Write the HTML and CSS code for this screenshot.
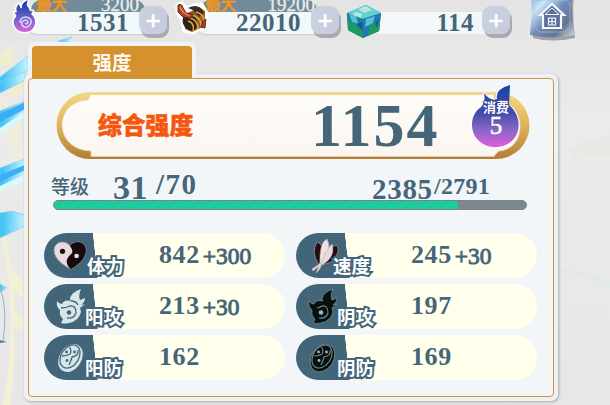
FILE: index.html
```html
<!DOCTYPE html>
<html lang="zh-CN">
<head>
    <meta charset="UTF-8">
    <meta name="viewport" content="width=device-width, initial-scale=1.0">
    <title>强度</title>
    <link rel="stylesheet" href="styles.css">
</head>
<body>

    <!-- Background scenery -->
    <svg class="scenery" width="610" height="405" viewBox="0 0 610 405">
        <defs>
            <linearGradient id="ray" x1="0" y1="0" x2="1" y2="0">
                <stop offset="0" stop-color="#35bdf5"/>
                <stop offset="1" stop-color="#c5f5ff"/>
            </linearGradient>
        </defs>
        <path d="M0 55 14 43 13 66 0 65zM8 88 28 74V89L10 100z" fill="#f0edcf"/>
        <path d="M0 98 8 108M0 106 5 113M5 134 20 125M7 140 22 132M9 146 23 139M10 152 24 145M12 158 25 151" stroke="#f3efd0" stroke-width="3"/>
        <path d="M0 234Q20 310 3 405H10Q18 350 12 326L25 333V320L14 310V291L25 300V283L12 270Q8 240 0 225z" fill="#f3f0d5"/>
        <g fill="url(#ray)" stroke="#86cfe8" stroke-width=".7">
            <path d="M0 77 28 56V70L0 89z"/>
            <path d="M58 41 72 37 66 43z"/>
            <path d="M0 82 25 72V80L0 93z"/>
            <path d="M0 111 25 101V118L0 132z"/>
            <path d="M0 168 25 159V180L0 190z"/>
            <path d="M0 213 12 211 25 215V226L0 238z"/>
            <path d="M0 284 7 288 0 292z"/>
        </g>
        <path d="M0 114 25 102V109L0 122zM0 175 25 165V170L0 182z" fill="#3caef4"/>
        <path d="M0 128 25 111V118L0 134zM0 186 25 174V181L0 191z" fill="#dcf8fe"/>
        <path d="M0 287Q8 310 3 341" fill="none" stroke="#8fb5b8"/>
        <path d="M0 340 7 342 0 343z" fill="#4f8794"/>
        <path d="M561 268Q585 272 610 283V287Q585 276 561 271z" fill="#e0eae5"/>
        <path d="M568 150Q590 138 610 135V156Q590 152 574 161z" fill="#e8e8e5"/>
    </svg>

    <div class="top-bar">
        <div class="resource soul">
            <svg class="resource-icon" width="26" height="36" viewBox="0 0 26 36">
                <defs>
                    <linearGradient id="flame" x1="0" y1="0" x2="0" y2="1">
                        <stop offset=".1" stop-color="#1740a8"/>
                        <stop offset=".55" stop-color="#6a62c4"/>
                        <stop offset="1" stop-color="#d764dc"/>
                    </linearGradient>
                </defs>
                <path d="M16 0Q9 3 10 8 8 9 7 4 3 8 5 12L2 13Q5 14 4 17C1 19 2 24 2 24 3 29 7 32 13 32S23 28 23 22Q23 17 19 14L21 11Q17 12 17 8 13 5 16 0z" fill="url(#flame)" stroke="#fff" stroke-width="3" stroke-linejoin="round" paint-order="stroke"/>
                <path d="M8 23Q8 17 14 17 20 18 19 23 17 28 12 27 8 24 11 21 15 19 16 22 15 25 13 23" fill="none" stroke="#d4ccf4" stroke-width="1.7"/>
            </svg>
            <div class="meter">
                <div class="limit"><span class="limit-label">最大</span><span>3200</span></div>
                <div class="amount">1531</div>
            </div>
            <button class="plus">+</button>
        </div>

        <div class="resource drum">
            <svg class="resource-icon" width="34" height="36" viewBox="0 0 34 36">
                <path d="M2 5 7 3 11 8 19 5 27 4 32 13 30 28 25 29 18 33 9 31 7 20 2 13z" fill="#fff" stroke="#fff" stroke-width="3" stroke-linejoin="round"/>
                <path d="M9 15 24 7 30 11 30 26 17 32 10 29z" fill="#986021"/>
                <ellipse cx="15" cy="22" rx="7" ry="9" fill="#2f211b" transform="rotate(-25 15 22)"/>
                <path d="M13 8Q24 2 29 13L24 17 18 10z" fill="#3d2a20"/>
                <path d="M15 15Q26 16 26 26M21 12Q29 14 29 21M13 21Q20 23 18 31M15 18Q23 20 23 29" fill="none" stroke="#e1a63f" stroke-width="1.5"/>
                <path d="M3 5Q7 3 8 8L11 13 18 14 16 18 8 17 3 12zM28 21 31 19 30 28 26 27z" fill="#b34328" stroke="#69271b"/>
                <path d="M5 7 8 12 14 16" fill="none" stroke="#e78159" stroke-width="1.5"/>
            </svg>
            <div class="meter">
                <div class="limit"><span class="limit-label">最大</span><span>19200</span></div>
                <div class="amount">22010</div>
            </div>
            <button class="plus">+</button>
        </div>

        <div class="resource cube">
            <svg class="resource-icon" width="36" height="35" viewBox="0 0 36 35">
                <path d="M1 9 20 1 35 9 33 27 17 34 2 26z" fill="#1686a3"/>
                <path d="M1 9 20 1 35 9 17 15z" fill="#67d0d2"/>
                <path d="M17 15 35 9 33 27 17 34z" fill="#2378ad"/>
                <path d="M1 9 17 15 17 34 2 26z" fill="#168591"/>
                <path d="M2 17 9 20 17 28V34L2 26zM24 20 34 17 33 27 22 31z" fill="#1b9b62"/>
                <path d="M3 10 10 12 12 20 6 18zM20 15 29 12 27 19 19 23z" fill="#58bfd6"/>
                <path d="M12 5 20 2 26 6 18 9zM9 8 16 10 15 14 7 11z" fill="#b3e9df"/>
                <path d="M10 20 17 18 16 26zM29 20 33 14 31 24z" fill="#1958a1"/>
            </svg>
            <div class="meter">
                <div class="amount">114</div>
            </div>
            <button class="plus">+</button>
        </div>

        <svg class="home" width="48" height="44" viewBox="0 0 48 44">
            <defs>
                <linearGradient id="glass" x1="0" y1="0" x2="1" y2="1">
                    <stop offset="0" stop-color="#7fa6d9"/>
                    <stop offset=".25" stop-color="#c9e8fa"/>
                    <stop offset=".5" stop-color="#728bb9"/>
                    <stop offset=".75" stop-color="#66758f"/>
                    <stop offset="1" stop-color="#d9dfe4"/>
                </linearGradient>
            </defs>
            <path d="M5-4Q24 0 46-4 44 16 47 38 24 43 5 38 6 18 5-4z" fill="#a2a3a6"/>
            <path d="M3-6Q24-2 44-6 43 14 46 35 24 40 2 35 4 16 3-6z" fill="url(#glass)"/>
            <path d="M6 3V27L11 32H37L42 27V3L38 0H10z" fill="none" stroke="#a9bad8" stroke-opacity=".7"/>
            <path d="M12 15 24 4 36 15H33V28H15V15z" fill="#5c719a" stroke="#f5f8fc" stroke-width="2.200"/>
            <path d="M17 14.500 24 8 31 14.500z" fill="#5c719a" stroke="#f5f8fc"/>
            <path d="M20.500 18h7v7h-7zM24 18v7M20.500 21.500h7" fill="#5c719a" stroke="#f5f8fc" stroke-width="1.200"/>
        </svg>
    </div>

    <div class="window">
        <div class="tab">强度</div>
        <div class="panel">
            <div class="panel-inner">

                <div class="banner">
                    <svg class="banner-frame" width="474" height="68" viewBox="0 0 474 68">
                        <defs>
                            <linearGradient id="gold" x1="0" y1="0" x2="0" y2="1">
                                <stop offset="0" stop-color="#f3d984"/>
                                <stop offset=".5" stop-color="#dfb35a"/>
                                <stop offset="1" stop-color="#b27e35"/>
                            </linearGradient>
                            <linearGradient id="cream" x1="0" y1="0" x2="0" y2="1">
                                <stop offset="0" stop-color="#fffdf9"/>
                                <stop offset="1" stop-color="#faf5ef"/>
                            </linearGradient>
                        </defs>
                        <rect x=".5" y="0" width="473" height="67" rx="33.5" fill="url(#gold)"/>
                        <path d="M35 2.500H438V8C472 10 472 57 443 59Q440 61 438 64.500H35V59C-3 58-3 10 31 8Q34 7 33 4z" fill="url(#cream)" stroke="#f1c5a0" stroke-width=".8"/>
                    </svg>
                    <span class="banner-label">综合强度</span>
                    <span class="banner-value">1154</span>
                    <div class="cost">
                        <svg class="cost-flame" width="50" height="65" viewBox="0 0 50 65">
                            <defs>
                                <linearGradient id="orb" x1="0" y1="0" x2="0" y2="1">
                                    <stop offset="0" stop-color="#1745ad"/>
                                    <stop offset=".45" stop-color="#464ba8"/>
                                    <stop offset=".72" stop-color="#8668c8"/>
                                    <stop offset="1" stop-color="#df5dda"/>
                                </linearGradient>
                            </defs>
                            <path d="M39 0Q24 4 26 14 20 17 13 8 15 17 10 22C-2 30-1 48 7 55 17 65 33 64 42 55 51 45 49 29 38 20 37 12 39 0z" fill="url(#orb)" stroke="#fff" stroke-width="2" paint-order="stroke"/>
                        </svg>
                        <span class="cost-label">消费</span>
                        <span class="cost-value">5</span>
                    </div>
                </div>

                <div class="level">
                    <span class="level-label">等级</span>
                    <span class="level-now">31</span>
                    <span class="level-max">/70</span>
                    <span class="exp-now">2385</span>
                    <span class="exp-max">/2791</span>
                </div>
                <div class="exp-bar"><div class="exp-fill" style="width: 85.5%"></div></div>

                <div class="stats">
                    <div class="stat">
                        <div class="stat-head">
                            <svg width="34" height="30" viewBox="0 0 36 32">
                                <path d="M19 30C11 26 1 19 1 10 1 1 12-2 18 5 24-2 35 1 35 10 35 19 25 27 19 30z" fill="#e8dade" stroke="#9ba0a6"/>
                                <path d="M19 30C12 24 14 18 19 14 23 10 18 7 18 5 24-2 35 1 35 10 35 19 25 27 19 30z" fill="#160b0d"/>
                                <circle cx="10" cy="11" r="2.800" fill="#160b0d"/>
                                <circle cx="25" cy="16" r="2.500" fill="#e8dade"/>
                            </svg>
                            <span class="stat-name">体力</span>
                        </div>
                        <div class="stat-value">842<span class="bonus">+300</span></div>
                    </div>

                    <div class="stat">
                        <div class="stat-head speed">
                            <svg width="30" height="36" viewBox="0 0 30 36">
                                <g stroke="#bcaead" stroke-width=".6">
                                    <path d="M8 25Q1 14 7 4 14 6 13 19L9 27z" fill="#210e11"/>
                                    <path d="M11 26Q17 9 27 7 31 15 21 24L12 27z" fill="#210e11"/>
                                    <path d="M10 27Q9 4 17 1 23 13 11 27z" fill="#f0e2e3"/>
                                    <path d="M11 26Q15 13 22 6 26 19 12 27z" fill="#e7d9dc"/>
                                    <path d="M11 25 2 31 3 33 9 28 6 35Q12 30 11 25z" fill="#f0e2e3"/>
                                </g>
                            </svg>
                            <span class="stat-name">速度</span>
                        </div>
                        <div class="stat-value">245<span class="bonus">+30</span></div>
                    </div>

                    <div class="stat">
                        <div class="stat-head attack">
                            <svg class="yang" width="30" height="37" viewBox="0 0 30 37">
                                <path class="shape" d="M25 1Q16 4 14 10 14 12 15 13 8 11 6 16 3 16 1 13 0 19 4 22 3 28 7 31L5 35Q9 36 13 35 23 33 25 24L24 20 29 16 25 17Q29 14 29 10L24 12Q22 8 25 1z"/>
                                <path class="line" d="M5 20Q10 20 14 18 20 17 20 25 18 31 11 30M15 13Q20 13 22 17"/>
                                <circle class="dot" cx="13" cy="24.500" r="2.300"/>
                            </svg>
                            <span class="stat-name">阳攻</span>
                        </div>
                        <div class="stat-value">213<span class="bonus">+30</span></div>
                    </div>

                    <div class="stat">
                        <div class="stat-head attack">
                            <svg class="yin" width="30" height="37" viewBox="0 0 30 37">
                                <path class="shape" d="M25 1Q16 4 14 10 14 12 15 13 8 11 6 16 3 16 1 13 0 19 4 22 3 28 7 31L5 35Q9 36 13 35 23 33 25 24L24 20 29 16 25 17Q29 14 29 10L24 12Q22 8 25 1z"/>
                                <path class="line" d="M9 20Q10 20 14 18 20 17 20 25 18 31 11 30"/>
                                <circle class="dot" cx="13" cy="24.500" r="2.300"/>
                            </svg>
                            <span class="stat-name">阴攻</span>
                        </div>
                        <div class="stat-value">197</div>
                    </div>

                    <div class="stat">
                        <div class="stat-head defense">
                            <svg class="yang" width="28" height="30" viewBox="0 0 28 30">
                                <ellipse class="shape" cx="13.500" cy="15" rx="11" ry="15" transform="rotate(33 13.500 15)"/>
                                <ellipse class="line" cx="13" cy="13.500" rx="8.800" ry="12.500" transform="rotate(33 13 13.500)"/>
                                <path class="line" d="M12.500 4Q15 8 13 11 10 13 5 13M21 7Q22 13 15 14 14 18 12 22"/>
                                <circle class="dot" cx="9.500" cy="9" r="1.400"/>
                                <circle class="dot" cx="17.500" cy="9" r="1.400"/>
                                <circle class="dot" cx="10" cy="17.500" r="1.400"/>
                            </svg>
                            <span class="stat-name">阳防</span>
                        </div>
                        <div class="stat-value">162</div>
                    </div>

                    <div class="stat">
                        <div class="stat-head defense">
                            <svg class="yin" width="28" height="30" viewBox="0 0 28 30">
                                <ellipse class="shape" cx="13.500" cy="15" rx="11" ry="15" transform="rotate(33 13.500 15)"/>
                                <ellipse class="line" cx="13" cy="13.500" rx="8.800" ry="12.500" transform="rotate(33 13 13.500)"/>
                                <path class="line" d="M12.500 4Q15 8 13 11 10 13 5 13M21 7Q22 13 15 14 14 18 12 22"/>
                                <circle class="dot" cx="9.500" cy="9" r="1.400"/>
                                <circle class="dot" cx="17.500" cy="9" r="1.400"/>
                                <circle class="dot" cx="10" cy="17.500" r="1.400"/>
                            </svg>
                            <span class="stat-name">阴防</span>
                        </div>
                        <div class="stat-value">169</div>
                    </div>
                </div>

            </div>
        </div>
    </div>

</body>
</html>
```
FILE: styles.css
```css
* {
    box-sizing: border-box;
}

body {
    margin: 0;
    width: 610px;
    height: 405px;
    overflow: hidden;
    position: relative;
    background: linear-gradient(#e4e4e4, #ebebeb 30%, #e7e7e7);
    font-family: "Liberation Serif", "Noto Sans CJK SC", serif;
    font-weight: bold;
    color: #456578;
}

svg {
    display: block;
    flex: none;
}

.scenery {
    position: absolute;
    top: 0;
    left: 0;
}

/* Top bar */
.top-bar {
    position: relative;
    display: flex;
    height: 42px;
    padding-left: 12px;
}

.resource {
    display: flex;
    flex: none;
}

.resource-icon {
    position: relative;
    z-index: 1;
}

.meter {
    display: flex;
    flex-direction: column;
    justify-content: flex-end;
    height: 34px;
    margin-left: -11px;
}

.soul {
    width: 163px;
}

.soul .meter {
    width: 122px;
}

.drum {
    width: 171px;
}

.drum .meter {
    width: 125px;
    margin-left: -13px;
}

.cube {
    width: 182px;
}

.cube .resource-icon {
    margin-top: 4px;
}

.cube .meter {
    width: 115px;
    margin-left: -5px;
}

.limit {
    display: flex;
    justify-content: space-between;
    height: 12px;
    margin: 0 4px;
    padding: 0 6px 0 5px;
    border-radius: 10px 10px 0 0;
    background-color: #718c98;
    color: #e8edef;
    font-size: 19px;
    font-weight: normal;
    line-height: 9px;
    -webkit-text-stroke: 0.3px currentColor;
}

.drum .limit {
    padding-right: 2px;
}

.limit-label {
    color: #ef941f;
    font-size: 15.5px;
    font-weight: bold;
    line-height: 9px;
}

.amount {
    height: 22px;
    padding-right: 20px;
    border-radius: 3px 4px 4px 10px;
    background-color: #f2f7f9;
    box-shadow: 0 1px 2px #c6cacd;
    font-size: 25px;
    line-height: 22px;
    letter-spacing: 0.5px;
    text-align: right;
}

.cube .amount {
    padding-right: 18px;
    border-radius: 0;
    box-shadow: none;
}

.plus {
    position: relative;
    width: 28px;
    height: 28px;
    margin: 6px 0 0 -10px;
    padding: 0;
    border: none;
    border-radius: 9px;
    background: linear-gradient(120deg, #c7d3df, #c9c9df);
    box-shadow: 2px 4px 0 #a9abb0;
    color: #fff;
    font: 26px/26px "Liberation Sans", sans-serif;
    -webkit-text-stroke: 0.6px currentColor;
}

/* Window */
.window {
    position: relative;
    width: 534px;
    margin-left: 24px;
}

.tab {
    position: relative;
    z-index: 1;
    width: 168px;
    height: 36px;
    margin-left: 4px;
    border: 4px solid #f0f3f7;
    border-bottom: none;
    border-radius: 8px 8px 0 0;
    background-color: #d6912f;
    color: #fff8ec;
    font-size: 19.5px;
    line-height: 36px;
    text-align: center;
}

.panel {
    height: 327px;
    margin-top: -4px;
    padding: 4px;
    border-radius: 7px;
    background-color: #f0f0f7;
    box-shadow: 1px 1px 3px #aaa;
}

.panel-inner {
    height: 319px;
    padding: 13px 16px 0 15px;
    border: 1px solid #ce953f;
    border-radius: 4px;
    background-color: #f2f6f8;
}

/* Banner */
.banner {
    position: relative;
    display: flex;
    width: 474px;
    height: 68px;
    margin-left: 12px;
}

.banner-frame {
    position: absolute;
    top: 0;
    left: 0;
}

.banner-label {
    position: relative;
    width: 215px;
    padding-left: 42px;
    color: #f6560d;
    font-family: "Noto Sans CJK SC", sans-serif;
    font-size: 23.8px;
    font-weight: 900;
    line-height: 64px;
    -webkit-text-stroke: 0.5px currentColor;
}

.banner-value {
    position: relative;
    width: 200px;
    padding-left: 40px;
    font-size: 62px;
    line-height: 67px;
    letter-spacing: 2px;
}

.cost {
    position: relative;
    display: flex;
    flex-direction: column;
    align-items: center;
    width: 50px;
    height: 65px;
    margin-top: -7px;
    padding-top: 13px;
    color: #fff;
}

.cost-flame {
    position: absolute;
    top: 0;
    left: 0;
}

.cost-label {
    position: relative;
    font: bold 13px/18px "Noto Sans CJK SC", sans-serif;
    paint-order: stroke;
    -webkit-text-stroke: 2px #38489e;
}

.cost-value {
    position: relative;
    font-size: 25px;
    font-weight: normal;
    line-height: 20px;
    -webkit-text-stroke: 0.5px currentColor;
}

/* Level */
.level {
    display: flex;
    align-items: baseline;
    height: 40px;
    padding-left: 7px;
    white-space: nowrap;
}

.level-label {
    width: 62px;
    font-size: 19px;
    font-weight: 500;
}

.level-now {
    width: 43px;
    font-size: 34px;
    line-height: 56px;
    letter-spacing: 0.5px;
}

.level-max {
    width: 216px;
    font-size: 29px;
    letter-spacing: 1.5px;
}

.exp-now {
    width: 62px;
    font-size: 29px;
    letter-spacing: 0.7px;
}

.exp-max {
    font-size: 24px;
    letter-spacing: 0.3px;
}

.level-label,
.level-max,
.exp-max {
    position: relative;
    top: -5px;
}

.exp-bar {
    position: relative;
    width: 474px;
    height: 10px;
    margin-left: 9px;
    border: 1px solid #79838a;
    border-radius: 5px;
    background-color: #7c878e;
    overflow: hidden;
}

.exp-fill {
    height: 8px;
    border-radius: 4px 0 0 4px;
    background: repeating-linear-gradient(135deg, #19d1a0 0 4px, #20c99b 4px 8px);
}

/* Stats */
.stats {
    display: grid;
    grid-template-columns: 241px 241px;
    gap: 6px 11px;
    margin-top: 23px;
}

.stat {
    display: flex;
    height: 45px;
    border-radius: 23px;
    background: linear-gradient(84deg, #42657a 53px, #ffffec 53.5px);
}

.stat-head {
    display: flex;
    align-items: center;
    width: 115px;
    padding-left: 9px;
}

.stat-head.speed {
    padding-left: 14px;
}

.stat-head.attack {
    padding-left: 12px;
}

.stat-head.defense {
    padding-left: 13px;
}

.stat-name {
    position: relative;
    align-self: flex-end;
    color: #fff;
    font-size: 18.5px;
    line-height: 22px;
    paint-order: stroke;
    -webkit-text-stroke: 4px #42657a;
}

.speed .stat-name {
    margin-left: -7px;
}

.attack .stat-name {
    margin-left: -1px;
}

.stat-value {
    font-size: 26px;
    line-height: 44px;
    letter-spacing: 0.6px;
}

.bonus {
    position: relative;
    top: 1px;
    margin-left: 3px;
    font-size: 23.5px;
    font-weight: normal;
    letter-spacing: 0;
    -webkit-text-stroke: 0.9px currentColor;
}

.yang .shape {
    fill: #d7e5e9;
}

.yang .line {
    fill: none;
    stroke: #42657a;
    stroke-width: 1.3;
}

.yang .dot {
    fill: #42657a;
}

.yin .shape {
    fill: #07100f;
    stroke: #778d90;
    stroke-width: 0.8;
}

.yin .line {
    fill: none;
    stroke: #768b91;
    stroke-width: 1.1;
}

.yin .dot {
    fill: #a7b5b9;
}
```
